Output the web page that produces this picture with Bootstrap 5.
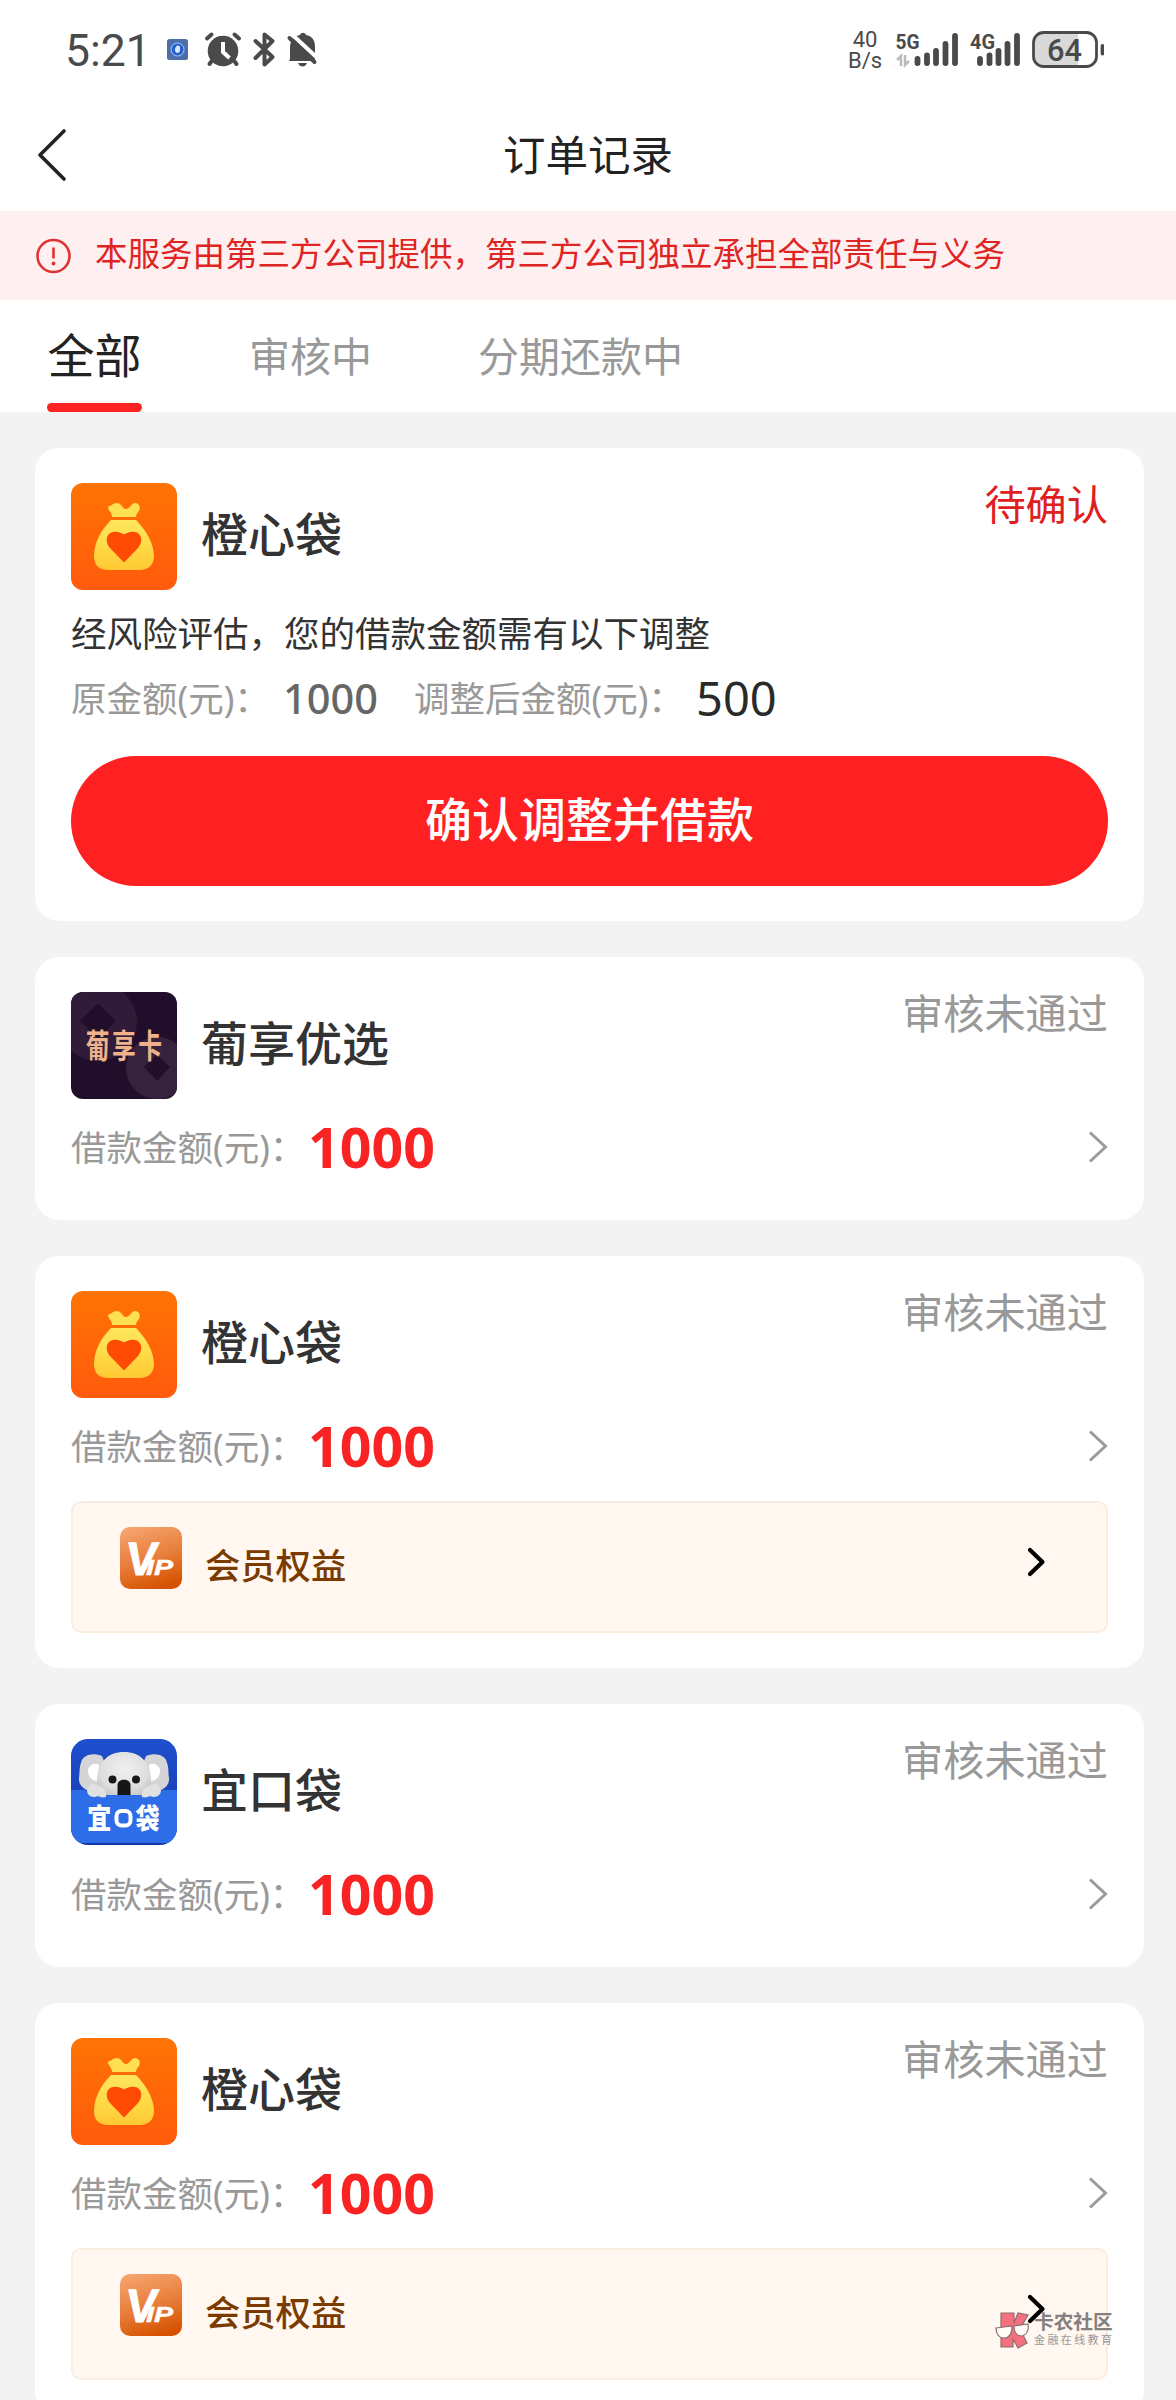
<!DOCTYPE html>
<html lang="zh-CN">
<head>
<meta charset="utf-8">
<meta name="viewport" content="width=device-width, initial-scale=1">
<title>订单记录</title>
<link href="https://cdn.jsdelivr.net/npm/bootstrap@5.3.0/dist/css/bootstrap.min.css" rel="stylesheet">
<style>
  body { font-family: "Noto Sans", "Noto Sans CJK SC", sans-serif; background: #f3f3f3; color: #333; }
  .screen { width: 1176px; height: 2400px; }
  svg { display: block; flex: none; }
  .status-bar { height: 100px; padding: 0 72px 0 65px; color: #4a4a4a; }
  .clock { font: 400 44.500px/44px Roboto, sans-serif; width: 95px; padding-top: 2px; }
  .net-rate { font: 400 22px/21px Roboto, sans-serif; width: 38px; text-align: center; }
  .title-bar { height: 111px; padding-left: 36px; padding-right: 36px; padding-bottom: 1px; }
  .title-bar h1 { font-size: 42.500px; line-height: 60px; font-weight: 400; color: #222; }
  .side-slot { width: 32px; }
  .notice { height: 89px; padding: 0 36px 3px; background: #fef0f1; color: #df2424; font-size: 32.5px; line-height: 40px; }
  .tabs { height: 112px; padding: 0 47px; font-size: 41px; color: #999; }
  .tabs .nav-link { padding: 0; color: #999; line-height: 112px; }
  .tabs .nav-link.active { color: #222; font-size: 47px; line-height: 110px; width: 95px; text-align: center; }
  .tab-line { height: 9px; border-radius: 5px; background: #fb2222; bottom: 0; left: 0; width: 95px; }
  .tab-b { margin-left: 107px; }
  .tab-c { margin-left: 106px; }
  .orders { padding: 36px 32px 0 35px; gap: 36px; }
  .order { border: 0; border-radius: 24px; padding: 35px 36px; flex: none; }
  .order-head { height: 106px; gap: 24px; }
  .order-name { font-size: 47px; line-height: 60px; font-weight: 500; color: #333; padding-bottom: 4px; }
  .state { font-size: 41.200px; line-height: 42px; color: #999; }
  .state-wait { color: #e02020; }
  .desc { font-size: 35.5px; line-height: 44px; margin-top: 22px; color: #333; }
  .adjust { height: 44px; margin-top: 21px; font-size: 35.5px; color: #999; line-height: 44px; }
  .old-sum { font-size: 41.5px; font-weight: 500; color: #666; width: 131px; }
  .new-sum { font-size: 47px; font-weight: 400; color: #2a2a2a; }
  .tag-a { width: 212px; }
  .tag-b { width: 282px; }
  .btn-confirm { height: 130px; margin-top: 36px; background: #ff2121; color: #fff; font-size: 47px; font-weight: 500; line-height: 60px; padding: 0 0 4px; }
  .btn-confirm:hover { background: #e81c1c; color: #fff; }
  .amount { height: 60px; margin: 19px 0 8px; font-size: 35.5px; line-height: 44px; color: #999; }
  .amount-tag { width: 237px; }
  .amount-sum { font-size: 55.5px; line-height: 60px; font-weight: 700; color: #fa2323; }
  .member { height: 132px; margin-top: 17px; border: 2px solid #fbece0; border-radius: 10px; background: #fff7f0; padding: 0 60px 18px 47px; color: #7b3b00; font-size: 35.3px; line-height: 44px; font-weight: 500; }
  .member-name { margin-left: 23px; padding-top: 14px; }
  .brand-mark { left: 995px; top: 2311px; gap: 4px; color: #858080; }
  .brand-name, .brand-sub { font-family: "Liberation Sans", "Noto Sans CJK SC", sans-serif; }
  .brand-name { font-size: 19.700px; line-height: 20px; font-weight: 700; }
  .brand-sub { font-size: 11px; line-height: 16px; letter-spacing: 2.4px; color: #9a9593; }
</style>
<script src="https://cdn.jsdelivr.net/npm/bootstrap@5.3.0/dist/js/bootstrap.bundle.min.js"></script>
</head>
<body>
<svg width="0" height="0" class="position-absolute" aria-hidden="true">
  <defs>
    <linearGradient id="gOrange" x2="0" y2="1"><stop offset="0" stop-color="#ff7404"/><stop offset="1" stop-color="#ff5a0c"/></linearGradient>
    <linearGradient id="gBag" x2="0" y2="1"><stop offset="0" stop-color="#ffe65c"/><stop offset=".5" stop-color="#fedb48"/><stop offset="1" stop-color="#ffc933"/></linearGradient>
    <linearGradient id="gVip" x1=".3" x2=".6" y2="1"><stop offset="0" stop-color="#f5a26c"/><stop offset=".55" stop-color="#e77b37"/><stop offset="1" stop-color="#d65200"/></linearGradient>
    <linearGradient id="gBlue" x2="0" y2="1"><stop offset="0" stop-color="#1f4fcf"/><stop offset="1" stop-color="#1338a5"/></linearGradient>
    <radialGradient id="gFur" cx=".5" cy=".35" r=".65"><stop offset="0" stop-color="#f0f0f0"/><stop offset=".7" stop-color="#dddddd"/><stop offset="1" stop-color="#c2c2c4"/></radialGradient>
    <symbol id="bag" viewBox="0 0 106 107">
      <rect width="106" height="107" rx="12" fill="url(#gOrange)"/>
      <path d="M37 23.500c3 0 5-3.500 9-3.500 5 0 5 6 9 6s5-6 9-6c4 0 6 4 4 8-2 2-3 4-3 6H41c0-5-4-6-4-10.500z" fill="#ffe052"/>
      <path d="M40 37h25c10 10 18 24 18 36 0 9-6 14-14 14H37c-9 0-14-5-14-14 0-13 7-26 17-36z" fill="url(#gBag)"/>
      <path d="M53 79.500L39 65c-5-6-4-13 1-15.500 5-2 10 0 13 2 3-2 8-4 13-2 5 2.500 6 9.500 1 15.500z" fill="#ff4a04"/>
    </symbol>
    <symbol id="vip" viewBox="0 0 62 62">
      <rect width="62" height="62" rx="10" fill="url(#gVip)"/>
      <text transform="translate(4 47.500) skewX(-8)" font-family="Liberation Sans, sans-serif" font-weight="700" font-size="47" fill="#fff" stroke="#fff" stroke-width="1" textLength="31" lengthAdjust="spacingAndGlyphs">V</text>
      <text x="26" y="47.500" font-family="Liberation Sans, sans-serif" font-weight="700" font-style="italic" font-size="22.500" fill="#fff" stroke="#fff" stroke-width=".5" textLength="27" lengthAdjust="spacingAndGlyphs">IP</text>
    </symbol>
    <symbol id="next" viewBox="0 0 20 34"><path d="M2 2.500L17.500 17 2 31.500" fill="none" stroke="#9b9b9b" stroke-width="3"/></symbol>
    <symbol id="nextBold" viewBox="0 0 20 34"><path d="M4 5l12.500 12L4 29" fill="none" stroke="#000" stroke-width="4.200" stroke-linecap="round" stroke-linejoin="round"/></symbol>
  </defs>
</svg>

<main class="screen d-flex flex-column overflow-hidden position-relative">
  <header class="bg-white flex-shrink-0">
    <div class="status-bar d-flex align-items-center">
      <div class="clock">5:21</div>
      <svg width="184" height="40" viewBox="160 30 184 40">
        <rect x="167" y="39" width="21" height="21" rx="2.500" fill="#4d6fa9"/>
        <circle cx="177.500" cy="49.500" r="6.500" fill="#2460d0" stroke="#a9c7f5"/>
        <path d="M175 48.500l2-3 1 0v0l2 1v4.500q-1 2-2.500 2t-2.500-2z" fill="#dbe6fa"/>
        <circle cx="223" cy="51" r="15.300" fill="#4a4a4a"/>
        <path d="M223 42v10l6.500 6" fill="none" stroke="#fff" stroke-width="4"/>
        <path d="M207 38.500l4.500-4M239 38.500l-4.500-4M212.500 60l-3 4M233.500 60l3 4" stroke="#4a4a4a" stroke-width="4" stroke-linecap="round"/>
        <path d="M255.500 41l17 16-8 7.500V34.500l8 6.500-17 17" fill="none" stroke="#4a4a4a" stroke-width="4" stroke-linejoin="round" stroke-linecap="round"/>
        <path d="M290 59V48c0-8 4-12 10-13 1-3 5-3 6 0 6 1 9 5 9 12v14H289z" fill="#4a4a4a"/>
        <path d="M298 63h9q-1.500 3.500-4.500 3.500T298 63z" fill="#4a4a4a"/>
        <path d="M292 34.500l26 24" stroke="#fff" stroke-width="4"/>
        <path d="M289.500 38l25 24" stroke="#4a4a4a" stroke-width="4" stroke-linecap="round"/>
      </svg>
      <div class="net-rate ms-auto">40<br>B/s</div>
      <svg class="ms-2" width="212" height="42" viewBox="892 29 212 42" font-family="Roboto, sans-serif" fill="#4a4a4a">
        <text x="895.500" y="49" font-size="20" font-weight="700" textLength="24" lengthAdjust="spacingAndGlyphs">5G</text>
        <path d="M897 60l4-4v10M905 55v10l4-4" fill="none" stroke="#bbb" stroke-width="2.500"/>
        <path d="M917.500 59v4M927 55.500v7.500M936 51v12M945.500 44v19M955 36v27" stroke="#4a4a4a" stroke-width="5.800" stroke-linecap="round"/>
        <text x="970" y="49" font-size="20" font-weight="700" textLength="25" lengthAdjust="spacingAndGlyphs">4G</text>
        <path d="M980 59v4M989.500 55.500v7.500M998.500 51v12M1007.500 44v19M1017 36v27" stroke="#4a4a4a" stroke-width="5.800" stroke-linecap="round"/>
        <rect x="1033.500" y="32.500" width="63" height="34" rx="10" fill="#fff"/>
        <path d="M1043 33h35v33h-35q-9 0-9-9V42q0-9 9-9z" fill="#d9d9d9"/>
        <rect x="1033.500" y="32.500" width="63" height="34" rx="10" fill="none" stroke="#4a4a4a" stroke-width="2.800"/>
        <path d="M1102.500 46v7.500" stroke="#4a4a4a" stroke-width="3.800" stroke-linecap="round"/>
        <text x="1047" y="61" font-size="31" font-weight="500" textLength="35" lengthAdjust="spacingAndGlyphs">64</text>
      </svg>
    </div>
    <div class="title-bar d-flex align-items-center justify-content-between">
      <svg width="32" height="56" viewBox="0 0 32 56"><path d="M28 4L4 28l24 24" fill="none" stroke="#222" stroke-width="3.600" stroke-linecap="round" stroke-linejoin="round"/></svg>
      <h1 class="m-0">订单记录</h1>
      <span class="side-slot"></span>
    </div>
  </header>

  <div class="notice d-flex align-items-center flex-shrink-0">
    <svg class="mt-1" width="35" height="36" viewBox="0 0 35 36"><circle cx="17.500" cy="18" r="16" fill="none" stroke="#df3333" stroke-width="2.600"/><path d="M17.500 9.500v11" stroke="#df3333" stroke-width="2.600"/><circle cx="17.500" cy="25.500" r="1.900" fill="#df3333"/></svg>
    <span class="ms-4">本服务由第三方公司提供，第三方公司独立承担全部责任与义务</span>
  </div>

  <nav class="tabs bg-white nav flex-nowrap flex-shrink-0">
    <a class="nav-link active position-relative" href="#">全部<span class="tab-line position-absolute"></span></a>
    <a class="nav-link tab-b" href="#">审核中</a>
    <a class="nav-link tab-c" href="#">分期还款中</a>
  </nav>

  <section class="orders d-flex flex-column">
    <article class="order card">
      <div class="order-head d-flex align-items-center">
        <svg width="106" height="107"><use href="#bag"/></svg>
        <span class="order-name">橙心袋</span>
        <span class="state state-wait ms-auto align-self-start">待确认</span>
      </div>
      <div class="desc">经风险评估，您的借款金额需有以下调整</div>
      <div class="adjust d-flex align-items-center">
        <span class="tag-a text-nowrap">原金额(元)：</span><span class="old-sum">1000</span>
        <span class="tag-b text-nowrap">调整后金额(元)：</span><span class="new-sum">500</span>
      </div>
      <button class="btn btn-confirm rounded-pill w-100">确认调整并借款</button>
    </article>

    <article class="order card">
      <div class="order-head d-flex align-items-center">
        <svg width="106" height="107" viewBox="0 0 106 107">
          <clipPath id="cp"><rect width="106" height="107" rx="12"/></clipPath>
          <g clip-path="url(#cp)">
            <rect width="106" height="107" fill="#210e2b"/>
            <circle cx="27" cy="30" r="39" fill="#301c38"/><path d="M27 11l18 18-18 18L9 29z" fill="#210e2b"/>
            <circle cx="86" cy="76" r="31" fill="#37223d"/><path d="M86 62l13 13-13 14-13-14z" fill="#210e2b"/>
          </g>
          <g font-family="Noto Sans CJK SC, sans-serif" font-weight="700" fill="#efb28c" transform="translate(0 65.500) scale(.72 1)" font-size="33"><text x="20.500">葡</text><text x="57">享</text><text x="93.500">卡</text></g>
        </svg>
        <span class="order-name">葡享优选</span>
        <span class="state ms-auto align-self-start">审核未通过</span>
      </div>
      <div class="amount d-flex align-items-center">
        <span class="amount-tag text-nowrap">借款金额(元)：</span><span class="amount-sum">1000</span>
        <svg class="ms-auto" width="20" height="34"><use href="#next"/></svg>
      </div>
    </article>

    <article class="order card">
      <div class="order-head d-flex align-items-center">
        <svg width="106" height="107"><use href="#bag"/></svg>
        <span class="order-name">橙心袋</span>
        <span class="state ms-auto align-self-start">审核未通过</span>
      </div>
      <div class="amount d-flex align-items-center">
        <span class="amount-tag text-nowrap">借款金额(元)：</span><span class="amount-sum">1000</span>
        <svg class="ms-auto" width="20" height="34"><use href="#next"/></svg>
      </div>
      <div class="member d-flex align-items-center">
        <svg width="62" height="62"><use href="#vip"/></svg>
        <span class="member-name">会员权益</span>
        <svg class="ms-auto mt-2" width="20" height="34"><use href="#nextBold"/></svg>
      </div>
    </article>

    <article class="order card">
      <div class="order-head d-flex align-items-center">
        <svg width="106" height="106" viewBox="0 0 106 106">
          <clipPath id="ck"><rect width="106" height="106" rx="17"/></clipPath>
          <g clip-path="url(#ck)">
            <rect width="106" height="106" fill="url(#gBlue)"/>
            <path d="M10 24c1-8 12-11 21-7l8 20-13 15c-10 2-19-5-18-13 1-6 0-10 2-15zM96 24c-1-8-12-11-21-7l-8 20 13 15c10 2 19-5 18-13-1-6 0-10-2-15z" fill="#d5d5d7"/>
            <path d="M17 30c3-6 8-6 11-4l-2 16c-6 0-10-6-9-12zM89 30c-3-6-8-6-11-4l2 16c6 0 10-6 9-12z" fill="#fff"/>
            <path d="M26 44c0-20 10-31 27-31s27 11 27 31c0 13-12 17-27 17s-27-4-27-17z" fill="url(#gFur)"/>
            <circle cx="41.500" cy="40.500" r="4" fill="#181818"/><circle cx="65" cy="40.500" r="4" fill="#181818"/>
            <path d="M0 51h15q4 7 13 5h50q9 2 13-5h15v49q-4 4-12 4H12q-8 0-12-4z" fill="#2d6de8"/>
            <path d="M46.500 56V46c0-7 13-7 13 0v10z" fill="#161616"/>
            <path d="M16 52c1-7 7-9 12-5 4 0 8 5 7 11-4 1-6 0-8-1-4 2-10 1-11-5zM90 52c-1-7-7-9-12-5-4 0-8 5-7 11 4 1 6 0 8-1 4 2 10 1 11-5z" fill="#e1e1e3"/>
            <g font-family="Noto Sans CJK SC, sans-serif" font-weight="900" fill="#fff" transform="translate(0 89.500) scale(.86 1)" font-size="28"><text x="19">宜</text><text x="75">袋</text></g>
            <rect x="45.500" y="72" width="14" height="14.500" rx="5" fill="none" stroke="#fff" stroke-width="4"/>
          </g>
        </svg>
        <span class="order-name">宜口袋</span>
        <span class="state ms-auto align-self-start">审核未通过</span>
      </div>
      <div class="amount d-flex align-items-center">
        <span class="amount-tag text-nowrap">借款金额(元)：</span><span class="amount-sum">1000</span>
        <svg class="ms-auto" width="20" height="34"><use href="#next"/></svg>
      </div>
    </article>

    <article class="order card">
      <div class="order-head d-flex align-items-center">
        <svg width="106" height="107"><use href="#bag"/></svg>
        <span class="order-name">橙心袋</span>
        <span class="state ms-auto align-self-start">审核未通过</span>
      </div>
      <div class="amount d-flex align-items-center">
        <span class="amount-tag text-nowrap">借款金额(元)：</span><span class="amount-sum">1000</span>
        <svg class="ms-auto" width="20" height="34"><use href="#next"/></svg>
      </div>
      <div class="member d-flex align-items-center">
        <svg width="62" height="62"><use href="#vip"/></svg>
        <span class="member-name">会员权益</span>
        <svg class="ms-auto mt-2" width="20" height="34"><use href="#nextBold"/></svg>
      </div>
    </article>
  </section>

  <div class="brand-mark position-absolute d-flex align-items-center">
    <svg width="35" height="38" viewBox="0 0 35 38">
      <path d="M6 2h13v10l4-10 10 2-8 14 7 14-9 5-5-9v8H6z" fill="#f5707e" stroke="#8b6f70" stroke-width="1.200"/>
      <path d="M1 17l16-2c0 8-3 12-8 12s-8-4-8-10zM19 15l14-2c1 7-2 11-6 12-5 0-8-4-8-10z" fill="#fffaf6" stroke="#8b6f70" stroke-width="1.200"/>
    </svg>
    <div class="text-nowrap"><div class="brand-name">卡农社区</div><div class="brand-sub">金融在线教育</div></div>
  </div>
</main>
</body>
</html>
